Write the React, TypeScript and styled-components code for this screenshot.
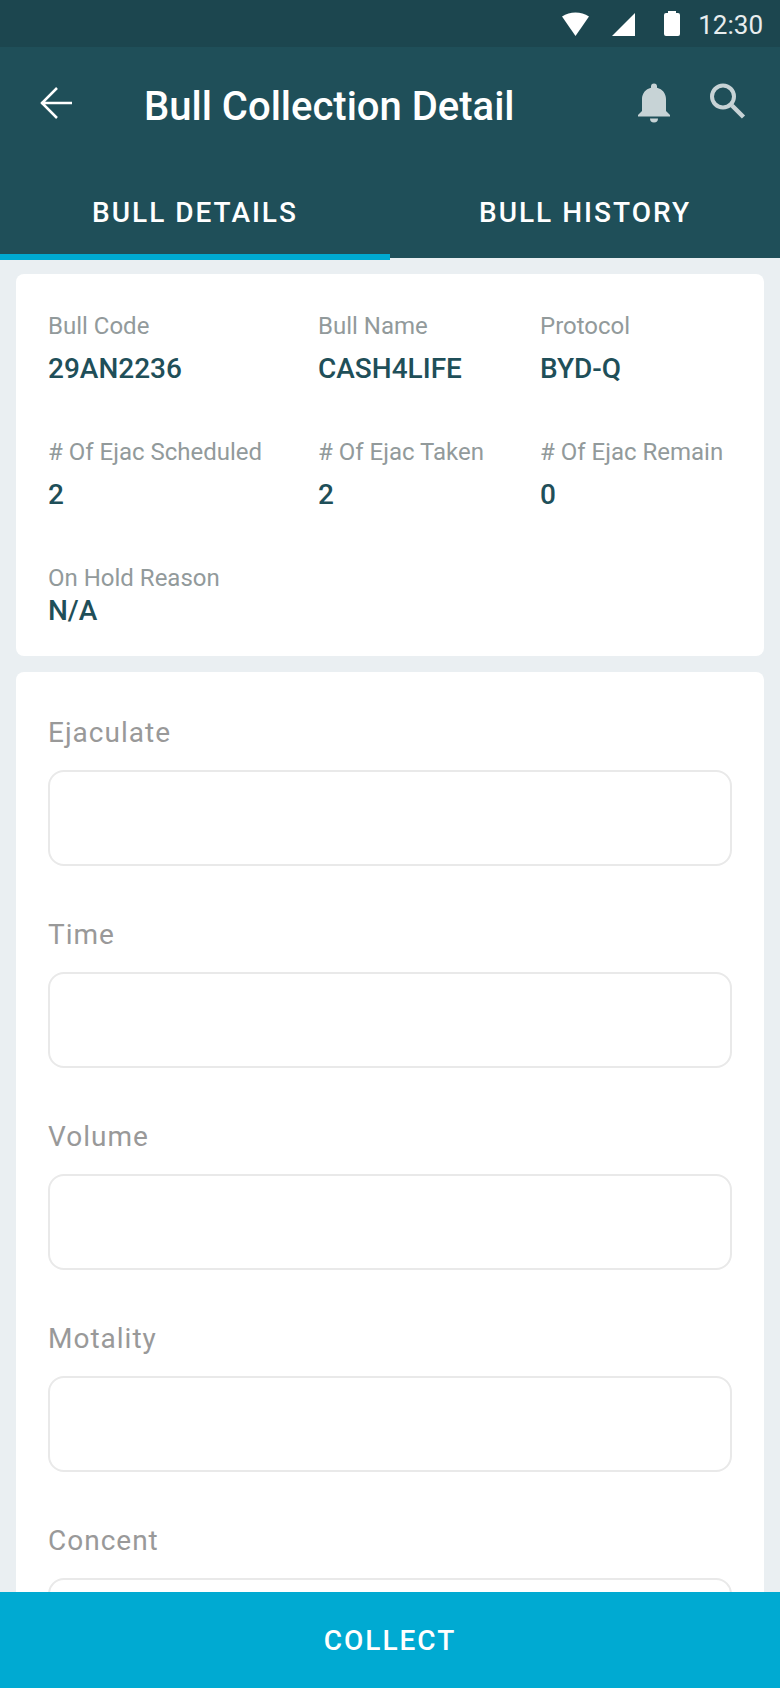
import React from "react";
import styled, { createGlobalStyle } from "styled-components";

const GlobalStyle = createGlobalStyle`
  *, *::before, *::after { box-sizing: border-box; }
  body { margin: 0; font-family: Roboto, "Liberation Sans", sans-serif; background: #eaeff2; }
  button, input { font-family: inherit; }
`;

const Screen = styled.div`
  display: flex;
  flex-direction: column;
  height: 100vh;
`;

const StatusBar = styled.div`
  display: flex;
  align-items: center;
  justify-content: flex-end;
  height: 47px;
  padding: 2px 17px 0 0;
  background: #1c464f;
  color: #e8edee;
  font-size: 26px;
  line-height: 32px;
`;

const StatusIcons = styled.svg`
  width: 120px;
  height: 28px;
  margin: 0 16px 2px 0;
`;

const Header = styled.header`
  position: relative;
  z-index: 1;
  background: #1f4f59;
  color: #fff;
`;

const TitleBar = styled.div`
  display: flex;
  align-items: center;
  height: 117px;
  padding: 0 32px;
`;

const Title = styled.h1`
  flex: 1;
  margin: 0 0 0 64px;
  padding-top: 2px;
  font-size: 40px;
  line-height: 48px;
  font-weight: 500;
`;

const IconButton = styled.button`
  display: flex;
  padding: 0;
  margin-bottom: 6px;
  border: 0;
  background: none;
  color: #c7d3d6;
  cursor: pointer;

  & + & { margin-left: 30px; }
`;

const Tabs = styled.div`
  display: flex;
  height: 94px;
`;

const Tab = styled.button<{ $active?: boolean }>`
  position: relative;
  flex: 1;
  padding: 4px 0 0;
  border: 0;
  background: none;
  color: #fff;
  font-size: 28px;
  line-height: 32px;
  font-weight: 500;
  letter-spacing: 2px;
  cursor: pointer;

  &::after {
    content: "";
    display: ${(p) => (p.$active ? "block" : "none")};
    position: absolute;
    left: 0;
    right: 0;
    bottom: -2px;
    height: 6px;
    background: #00aad2;
  }
`;

const Content = styled.main`
  flex: 1;
  min-height: 0;
  overflow-y: auto;
  scrollbar-width: none;
  display: flex;
  flex-direction: column;
  gap: 16px;
  padding: 16px;
`;

const Card = styled.section`
  flex-shrink: 0;
  border-radius: 8px;
  background: #fff;
`;

const Facts = styled(Card).attrs({ as: "dl" })`
  display: grid;
  grid-template-columns: 45fr 37fr 32fr;
  row-gap: 53px;
  margin: 0;
  padding: 38px 32px 29px;
`;

const Fact = styled.div<{ $tight?: boolean }>`
  display: flex;
  flex-direction: column;
  gap: ${(p) => (p.$tight ? 3 : 13)}px;
  white-space: nowrap;
`;

const FactLabel = styled.dt`
  color: #929a9b;
  font-size: 24px;
  line-height: 28px;
`;

const FactValue = styled.dd`
  margin: 0;
  color: #1f4f59;
  font-size: 28px;
  line-height: 32px;
  font-weight: 500;
`;

const Form = styled(Card).attrs({ as: "form" })`
  display: flex;
  flex-direction: column;
  gap: 53px;
  padding: 45px 32px;
`;

const Field = styled.div`
  display: flex;
  flex-direction: column;
  gap: 21px;
`;

const FieldLabel = styled.label`
  color: #999;
  font-size: 28px;
  line-height: 32px;
  letter-spacing: 1px;
`;

const FieldInput = styled.input`
  width: 100%;
  height: 96px;
  padding: 0 24px;
  border: 2px solid #e9e9e9;
  border-radius: 16px;
  background: #fff;
  color: #1f4f59;
  font-size: 28px;
`;

const CollectButton = styled.button`
  flex-shrink: 0;
  height: 96px;
  padding: 2px 0 0;
  border: 0;
  background: #00aad2;
  color: #fff;
  font-size: 28px;
  line-height: 32px;
  font-weight: 500;
  letter-spacing: 2px;
  cursor: pointer;
`;

const facts = [
  { label: "Bull Code", value: "29AN2236" },
  { label: "Bull Name", value: "CASH4LIFE" },
  { label: "Protocol", value: "BYD-Q" },
  { label: "# Of Ejac Scheduled", value: "2" },
  { label: "# Of Ejac Taken", value: "2" },
  { label: "# Of Ejac Remain", value: "0" },
  { label: "On Hold Reason", value: "N/A", tight: true },
];

const fields = ["Ejaculate", "Time", "Volume", "Motality", "Concent"];

export default function App() {
  return (
    <Screen>
      <GlobalStyle />
      <StatusBar>
        <StatusIcons viewBox="0 0 120 28" fill="#fff" aria-hidden="true">
          <path d="M0 6.500C8 1 19 1 27 6.500L13.500 26Z" />
          <path d="M73 3V26H50Z" />
          <path d="M106 1h8v2h2a2 2 0 0 1 2 2v19a2 2 0 0 1-2 2h-12a2 2 0 0 1-2-2V5a2 2 0 0 1 2-2h2Z" />
        </StatusIcons>
        <time>12:30</time>
      </StatusBar>
      <Header>
        <TitleBar>
          <IconButton type="button" aria-label="Back">
            <svg width="48" height="40" viewBox="0 0 48 40" fill="none" stroke="#fff" strokeWidth="2.500">
              <path d="M40 20H9M25 5L10 20L25 35" />
            </svg>
          </IconButton>
          <Title>Bull Collection Detail</Title>
          <IconButton type="button" aria-label="Notifications">
            <svg width="48" height="40" viewBox="0 0 48 40" fill="currentColor">
              <path d="M24 0.500a3 3 0 0 1 3 3v1.200C32.500 6 36 10.500 36 16v12l4 4v1.500H8V32l4-4V16C12 10.500 15.500 6 21 4.700V3.500a3 3 0 0 1 3-3ZM20 35.500h8a4 4 0 0 1-8 0Z" />
            </svg>
          </IconButton>
          <IconButton type="button" aria-label="Search">
            <svg width="40" height="40" viewBox="0 0 40 40" fill="none" stroke="currentColor">
              <circle cx="15" cy="13.500" r="11" strokeWidth="4" />
              <path d="M24 22.500L35.500 34" strokeWidth="4.500" />
            </svg>
          </IconButton>
        </TitleBar>
        <Tabs role="tablist">
          <Tab type="button" role="tab" aria-selected="true" $active>BULL DETAILS</Tab>
          <Tab type="button" role="tab" aria-selected="false">BULL HISTORY</Tab>
        </Tabs>
      </Header>
      <Content>
        <Facts>
          {facts.map((fact) => (
            <Fact key={fact.label} $tight={fact.tight}>
              <FactLabel>{fact.label}</FactLabel>
              <FactValue>{fact.value}</FactValue>
            </Fact>
          ))}
        </Facts>
        <Form>
          {fields.map((name) => (
            <Field key={name}>
              <FieldLabel htmlFor={name}>{name}</FieldLabel>
              <FieldInput id={name} name={name} type="text" />
            </Field>
          ))}
        </Form>
      </Content>
      <CollectButton type="button">COLLECT</CollectButton>
    </Screen>
  );
}
